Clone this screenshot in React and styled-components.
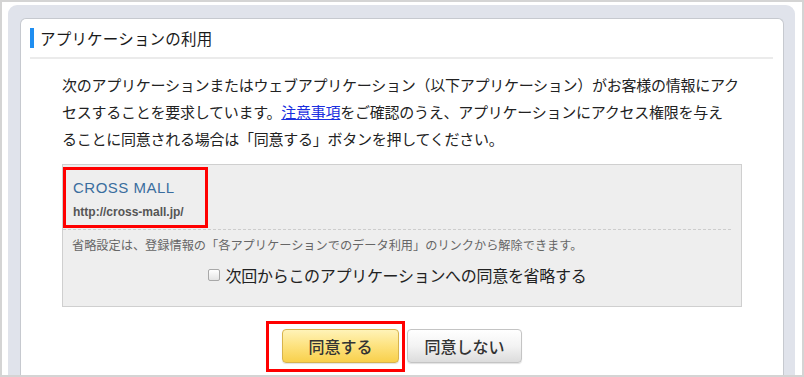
import React from 'react';
import styled, { createGlobalStyle } from 'styled-components';

const GlobalStyle = createGlobalStyle`
  html, body {
    margin: 0;
    padding: 0;
    background: #fff;
  }
  body {
    font-family: "Noto Sans CJK JP", "Noto Sans", sans-serif;
    color: #222;
  }
`;

const Frame = styled.div`
  width: 804px;
  height: 377px;
  box-sizing: border-box;
  border: 2px solid #d4d4d4;
  background: #fff;
  overflow: hidden;
  padding: 3px 7px 0 6px;
`;

const Panel = styled.div`
  height: 100%;
  box-sizing: border-box;
  background: #e0e3eb;
  border-radius: 9px 9px 0 0;
  padding: 13px 11px 0 12px;
`;

const Card = styled.div`
  height: 100%;
  box-sizing: border-box;
  background: #fff;
  border: 1px solid #c6c9cf;
  border-bottom: none;
  border-radius: 6px 6px 0 0;
`;

const Heading = styled.div`
  margin: 0 10px 0 9px;
  padding: 9px 0 9px;
  border-bottom: 2px solid #ebebeb;
  display: flex;
  align-items: center;
  gap: 6px;

  &::before {
    content: '';
    width: 4px;
    height: 20px;
    background: #1f8ef1;
  }
`;

const HeadingText = styled.h2`
  margin: 0;
  font-size: 15.5px;
  font-weight: 400;
  line-height: 20px;
  letter-spacing: 0.2px;
  color: #1a1a1a;
`;

const Body = styled.div`
  padding: 0 41px;
`;

const Lead = styled.p`
  margin: 12px 0 0;
  font-size: 15px;
  line-height: 27px;
  letter-spacing: -0.25px;
  white-space: nowrap;
  color: #222;

  a {
    color: #1a2fe0;
    text-decoration: underline;
  }
`;

const InfoBox = styled.div`
  margin-top: 12px;
  height: 143px;
  box-sizing: border-box;
  background: #eeeeee;
  border: 1px solid #cfcfcf;
  padding-right: 10px;
`;

const AppInfo = styled.div`
  position: relative;
  padding: 13px 0 9px 10px;
  border-bottom: 1px dashed #cdcdcd;
`;

const AppName = styled.div`
  font-family: "Liberation Sans", Arial, sans-serif;
  font-size: 15px;
  line-height: 20px;
  letter-spacing: 0.5px;
  color: #3a6d9e;
`;

const AppUrl = styled.div`
  margin-top: 6px;
  font-family: "Liberation Sans", Arial, sans-serif;
  font-size: 12px;
  font-weight: 700;
  line-height: 16px;
  color: #555;
`;

const Highlight = styled.span`
  position: absolute;
  box-sizing: border-box;
  border: 3px solid #ff0000;
  pointer-events: none;
  top: ${(p) => p.$top}px;
  left: ${(p) => p.$left}px;
  right: ${(p) => (p.$right === undefined ? 'auto' : `${p.$right}px`)};
  bottom: ${(p) => (p.$bottom === undefined ? 'auto' : `${p.$bottom}px`)};
  width: ${(p) => (p.$width ? `${p.$width}px` : 'auto')};
  height: ${(p) => (p.$height ? `${p.$height}px` : 'auto')};
`;

const Note = styled.div`
  padding: 6px 0 0 9px;
  font-size: 12.2px;
  line-height: 18px;
  color: #666;
  white-space: nowrap;
`;

const CheckRow = styled.label`
  margin-top: 11px;
  display: flex;
  justify-content: center;
  align-items: center;
  gap: 6px;
  font-size: 16px;
  line-height: 20px;
  letter-spacing: -0.3px;
  color: #222;
`;

const CheckBox = styled.span`
  width: 12px;
  height: 12px;
  box-sizing: border-box;
  border: 1px solid #a8a8a8;
  border-radius: 2px;
  background: linear-gradient(#ffffff, #e4e4e4);
`;

const Actions = styled.div`
  margin-top: 22px;
  display: flex;
  justify-content: center;
  gap: 8px;
`;

const ButtonSlot = styled.div`
  position: relative;
`;

const Button = styled.button`
  width: ${(p) => p.$width}px;
  height: 34px;
  box-sizing: border-box;
  border-radius: 4px;
  font-family: "Noto Sans CJK JP", sans-serif;
  font-size: 16px;
  font-weight: 500;
  color: #333;
  cursor: pointer;
  border: 1px solid ${(p) => (p.$primary ? '#d8b44c' : '#c4c4c4')};
  background: ${(p) =>
    p.$primary
      ? 'linear-gradient(#fff3b8 0%, #fde27e 50%, #f8d04c 100%)'
      : 'linear-gradient(#ffffff 0%, #f3f3f3 50%, #dcdcdc 100%)'};
  box-shadow: 0 1px 1px rgba(0, 0, 0, 0.12);
`;

function App() {
  return (
    <Frame>
      <GlobalStyle />
      <Panel>
        <Card>
          <Heading>
            <HeadingText>アプリケーションの利用</HeadingText>
          </Heading>
          <Body>
            <Lead>
              次のアプリケーションまたはウェブアプリケーション（以下アプリケーション）がお客様の情報にアク
              <br />
              セスすることを要求しています。<a href="#notice">注意事項</a>
              をご確認のうえ、アプリケーションにアクセス権限を与え
              <br />
              ることに同意される場合は「同意する」ボタンを押してください。
            </Lead>
            <InfoBox>
              <AppInfo>
                <AppName>CROSS MALL</AppName>
                <AppUrl>http://cross-mall.jp/</AppUrl>
                <Highlight $top={2} $left={0} $width={145} $height={61} />
              </AppInfo>
              <Note>
                省略設定は、登録情報の「各アプリケーションでのデータ利用」のリンクから解除できます。
              </Note>
              <CheckRow>
                <CheckBox />
                次回からこのアプリケーションへの同意を省略する
              </CheckRow>
            </InfoBox>
            <Actions>
              <ButtonSlot>
                <Button $primary $width={117}>同意する</Button>
                <Highlight $top={-8} $left={-16} $right={-6} $bottom={-9} />
              </ButtonSlot>
              <ButtonSlot>
                <Button $width={115}>同意しない</Button>
              </ButtonSlot>
            </Actions>
          </Body>
        </Card>
      </Panel>
    </Frame>
  );
}

export default App;
